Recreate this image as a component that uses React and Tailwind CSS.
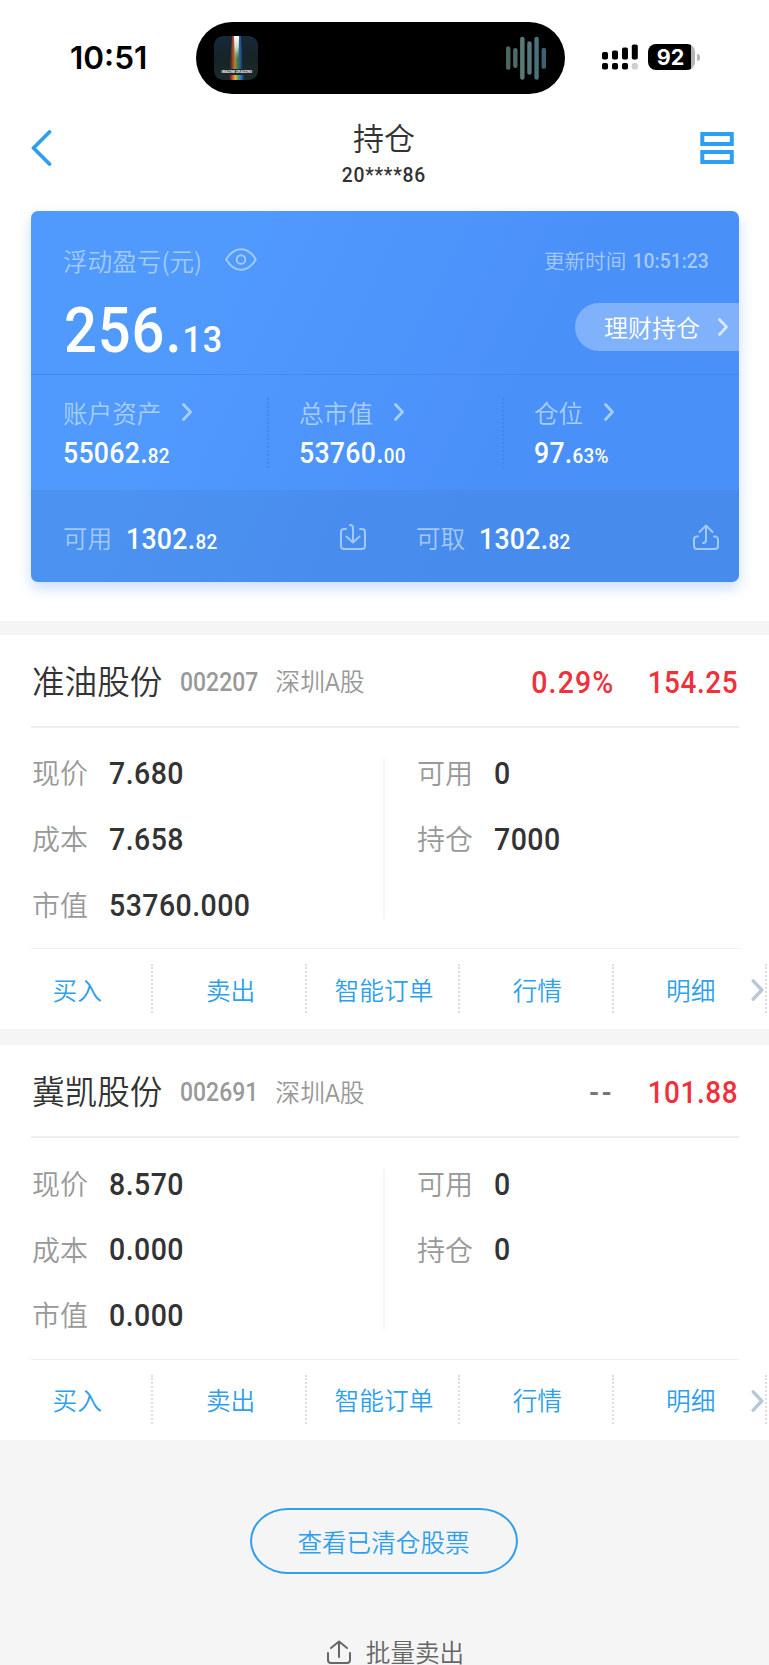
import React from 'react';

const summary = [
  { label: '账户资产', int: '55062.', dec: '82', width: 'w-[236px]' },
  { label: '总市值', int: '53760.', dec: '00', width: 'w-[235px]' },
  { label: '仓位', int: '97.', dec: '63%', width: 'w-[200px]' },
];

const stocks = [
  {
    name: '准油股份',
    code: '002207',
    market: '深圳A股',
    rate: '0.29%',
    profit: '154.25',
    left: [['现价', '7.680'], ['成本', '7.658'], ['市值', '53760.000']],
    right: [['可用', '0'], ['持仓', '7000']],
  },
  {
    name: '冀凯股份',
    code: '002691',
    market: '深圳A股',
    rate: '--',
    profit: '101.88',
    left: [['现价', '8.570'], ['成本', '0.000'], ['市值', '0.000']],
    right: [['可用', '0'], ['持仓', '0']],
  },
];

const actions = ['买入', '卖出', '智能订单', '行情', '明细'];

const wave = [
  { x: 0, y: 10, h: 24, fill: '#4a6660' },
  { x: 7.2, y: 12, h: 20, fill: '#4d6b66' },
  { x: 14.3, y: 0.5, h: 43.5, fill: '#5a7a76' },
  { x: 21.5, y: 5, h: 34, fill: '#56767c' },
  { x: 28.7, y: 0.5, h: 43.5, fill: '#48727c' },
  { x: 36, y: 11.5, h: 21.5, fill: '#3b6470' },
];

const Chevron = ({ className }) => (
  <svg className={className} viewBox="0 0 10 18" fill="none" stroke="currentColor" strokeWidth="2.8" strokeLinecap="round" strokeLinejoin="round">
    <path d="M1.5 1.5 8.5 9l-7 7.5" />
  </svg>
);

const StatusBar = () => (
  <div className="flex h-[116px] pt-[22px]">
    <div className="flex h-[72px] w-[196px] items-center pl-[70px] font-['Inter'] text-[31.500px] font-semibold text-black">10:51</div>
    <div className="flex h-[72px] w-[369px] items-center justify-between rounded-full bg-black pr-[19px] pl-[18px]">
      <svg className="h-11 w-11 rounded-[9px]" viewBox="0 0 44 44">
        <defs>
          <linearGradient id="prism">
            <stop offset="0" stopColor="#b9242a" stopOpacity="0" />
            <stop offset="0.2" stopColor="#c8452a" />
            <stop offset="0.4" stopColor="#e8b53a" />
            <stop offset="0.58" stopColor="#4aa35a" />
            <stop offset="0.8" stopColor="#2a62c4" />
            <stop offset="1" stopColor="#1b2f66" stopOpacity="0" />
          </linearGradient>
          <linearGradient id="beam" x2="0" y2="1">
            <stop offset="0" stopColor="#fff" />
            <stop offset="0.5" stopColor="#e9f2ff" stopOpacity="0.8" />
            <stop offset="1" stopColor="#9fd0e8" stopOpacity="0" />
          </linearGradient>
          <linearGradient id="sky" x2="0" y2="1">
            <stop offset="0" stopColor="#16293a" />
            <stop offset="0.5" stopColor="#172427" />
            <stop offset="1" stopColor="#1c2a2a" />
          </linearGradient>
        </defs>
        <rect width="44" height="44" fill="url(#sky)" />
        <path d="M18 0h9l2.500 33H15.500z" fill="url(#prism)" opacity="0.7" />
        <path d="M20 0h5l-.5 23h-3.500z" fill="url(#beam)" />
        <rect x="15" y="39" width="16" height="5" fill="url(#prism)" />
        <text x="22.800" y="37.400" textAnchor="middle" fontSize="3.200" fontWeight="700" fontFamily="Inter" fill="#fff">IMAGINE DRAGONS</text>
      </svg>
      <svg className="h-11 w-10" viewBox="0 0 40.500 44">
        {wave.map((b) => (
          <rect key={b.x} x={b.x} y={b.y} width="4.500" height={b.h} rx="2.200" fill={b.fill} />
        ))}
      </svg>
    </div>
    <div className="flex h-[70px] items-center pl-[37px]">
      <svg className="h-[26px] w-9" viewBox="0 0 36 26">
        <rect x="0" y="8" width="6" height="7.500" rx="1.800" />
        <rect x="10" y="6.500" width="6" height="9" rx="1.800" />
        <rect x="20" y="3.500" width="6" height="12" rx="1.800" />
        <rect x="29.800" y="0.500" width="6" height="15" rx="1.800" />
        <rect x="0" y="19" width="6" height="6.500" rx="1.800" />
        <rect x="10" y="19" width="6" height="6.500" rx="1.800" />
        <rect x="20" y="19" width="6" height="6.500" rx="1.800" />
        <rect x="29.800" y="19" width="6" height="6.500" rx="1.800" fill="#cfcfcf" />
      </svg>
      <div className="ml-2.5 flex h-[26px] w-[47px] items-center justify-center rounded-[8px] bg-linear-to-r from-black from-91% to-[#b5b5b5] to-91% pr-0.5 font-['Inter'] text-[21.500px] font-bold text-white">
        92
      </div>
      <div className="ml-0.5 h-[7px] w-[3px] rounded-r-full bg-[#b5b5b5]" />
    </div>
  </div>
);

const Header = () => (
  <header className="flex h-[94.500px] justify-between pr-[35px] pl-[30px]">
    <svg className="mt-3.5 h-9 w-[34px]" viewBox="0 0 34 36" fill="none" stroke="#2e9fee" strokeWidth="3.800" strokeLinecap="round" strokeLinejoin="round">
      <path d="M19.500 2 3.500 18l16 16" />
    </svg>
    <div className="flex flex-col items-center pl-1 text-[#333]">
      <h1 className="mt-0.5 text-[31px] leading-[38px] font-[350]">持仓</h1>
      <p className="mt-1.5 scale-x-92 font-['Roboto'] text-[21px] leading-[26px] font-medium tracking-[0.04em]">20****86</p>
    </div>
    <svg className="mt-4 h-8 w-[34px]" viewBox="0 0 34 32" fill="none" stroke="#2e9fee" strokeWidth="4">
      <rect x="2.300" y="2" width="29.500" height="10" />
      <rect x="2.300" y="20" width="29.500" height="10" />
    </svg>
  </header>
);

// Digits are set narrow and slightly tracked out, like DIN
const Amount = ({ int, dec }) => (
  <span className="inline-block origin-left scale-x-92 font-['Roboto'] text-[29px] leading-[34px] font-medium tracking-[0.01em] text-white">
    {int}<span className="text-[20.500px]">{dec}</span>
  </span>
);

const AssetCard = () => (
  <section className="mr-[30px] ml-[31px] h-[371.500px] overflow-hidden rounded-[7px] bg-linear-[115deg] from-[#5099fd] from-25% to-[#4a90f9] to-65% shadow-[0_6px_14px_rgba(74,144,248,0.3)]">
    <div className="h-[164px] border-b border-[#4489ec] pl-8">
      <div className="flex h-[92px] items-center justify-between pt-2 pr-[30px]">
        <div className="flex items-center text-[#a3caff]">
          <span className="text-[24.600px] font-[350]">浮动盈亏(元)</span>
          <svg className="mb-0.5 ml-[23px] h-[23px] w-8" viewBox="0 0 32 23" fill="none" stroke="currentColor" strokeWidth="1.900">
            <path d="M1.200 11.500C5 5 10 1.200 16 1.200s11 3.800 14.800 10.300C27 18 22 21.800 16 21.800S5 18 1.200 11.500z" strokeLinejoin="round" />
            <circle cx="16" cy="11.500" r="4.300" />
          </svg>
        </div>
        <div className="flex items-center text-[20.600px] font-[350] text-[#a6c8fc]">
          更新时间
          <span className="origin-right scale-x-92 pt-0.5 font-['Roboto'] text-[21px] font-medium">10:51:23</span>
        </div>
      </div>
      <div className="flex h-[48px] items-center justify-between">
        <span className="mt-[18px] ml-px inline-block origin-left scale-x-92 font-['Roboto'] text-[63px] leading-[60px] font-medium tracking-[0.015em] text-white">
          256.<span className="text-[37px]">13</span>
        </span>
        <button className="flex h-[48px] w-[164px] items-center rounded-l-full bg-white/30 pl-[29px] text-[24px] font-[350] text-white">
          理财持仓
          <Chevron className="ml-[18px] h-[18px] w-[10px] opacity-70" />
        </button>
      </div>
    </div>
    <div className="flex h-[115.500px] pt-[21px] pl-8">
      {summary.map((item, i) => (
        <div key={item.label} className={`flex h-[70px] ${item.width}`}>
          <div className="flex-1">
            <div className="flex h-[34px] items-center text-[24.600px] font-[350] text-[#a8cdff]">
              {item.label}
              <Chevron className="mb-0.5 ml-[21px] h-[18px] w-[10px]" />
            </div>
            <div className="mt-1.5">
              <Amount int={item.int} dec={item.dec} />
            </div>
          </div>
          {i < 2 && <div className="mt-0.5 mr-[30px] h-[70px] border-l-2 border-dotted border-[#4288ee]" />}
        </div>
      ))}
    </div>
    <div className="flex h-[92px] items-center bg-[#3c78c0]/20 pl-8 text-[24.600px] font-[350] text-[#a3c8fa]">
      <div className="flex w-[353px] items-center">
        <span className="mr-3.5 pt-0.5">可用</span>
        <div className="pt-1.5">
          <Amount int="1302." dec="82" />
        </div>
        <svg className="mt-0.5 mr-[50px] ml-auto h-[26px] w-[26px]" viewBox="0 0 26 26" fill="none" stroke="currentColor" strokeWidth="2" strokeLinecap="round" strokeLinejoin="round">
          <path d="M6 5H4a3 3 0 0 0-3 3v14a3 3 0 0 0 3 3h18a3 3 0 0 0 3-3V8a3 3 0 0 0-3-3h-2M10 1c2 0 3 1 3 3v14M6.500 12.500 13 18.500l6.500-6" />
        </svg>
      </div>
      <div className="flex flex-1 items-center">
        <span className="mr-3.5 pt-0.5">可取</span>
        <div className="pt-1.5">
          <Amount int="1302." dec="82" />
        </div>
        <svg className="mt-0.5 mr-[20px] ml-auto h-[26px] w-[26px]" viewBox="0 0 26 26" fill="none" stroke="currentColor" strokeWidth="2" strokeLinecap="round" strokeLinejoin="round">
          <path d="M5 12.500H4a3 3 0 0 0-3 3V22a3 3 0 0 0 3 3h18a3 3 0 0 0 3-3v-6.500a3 3 0 0 0-3-3h-1M10 19c2 0 3-1 3-3V1.500M6.500 8 13 1.500 19.500 8" />
        </svg>
      </div>
    </div>
  </section>
);

const Field = ({ label, value }) => (
  <div className="flex h-[65.800px] items-center">
    <span className="w-[78px] pb-0.5 pl-px text-[28px] font-[350] text-[#999]">{label}</span>
    <span className="origin-left scale-x-92 pt-0.5 font-['Roboto'] text-[31px] font-medium tracking-[0.015em] text-[#333]">{value}</span>
  </div>
);

const StockCard = ({ stock }) => (
  <section className="h-[394.500px] overflow-hidden bg-white">
    <div className="mr-[30px] ml-[31px] flex h-[93px] items-center border-b-2 border-[#eee]">
      <h2 className="pl-px text-[32.600px] font-[350] text-[#333]">{stock.name}</h2>
      <span className="ml-[18px] w-[95px] origin-left scale-x-90 pt-1 font-['Roboto'] text-[25.500px] font-medium text-[#999]">{stock.code}</span>
      <span className="pt-0.5 text-[24.800px] font-[350] text-[#999]">{stock.market}</span>
      <span className={`ml-auto origin-right scale-x-92 pt-1.5 font-['Roboto'] text-[31px] font-medium ${stock.rate === '--' ? 'tracking-[0.1em] text-[#777]' : 'tracking-[0.04em] text-[#ee313a]'}`}>{stock.rate}</span>
      <span className="w-[125px] origin-right scale-x-90 pt-1.5 pr-px text-right font-['Roboto'] text-[31px] font-medium tracking-[0.02em] text-[#ee313a]">{stock.profit}</span>
    </div>
    <div className="mr-[30px] ml-[31px] flex h-[221.500px] border-b border-[#eee] pt-[13px]">
      <div className="w-[352px]">
        {stock.left.map(([label, value]) => (
          <Field key={label} label={label} value={value} />
        ))}
      </div>
      <div className="mt-[18px] h-40 border-l-2 border-[#f5f5f5]" />
      <div className="pl-[31px]">
        {stock.right.map(([label, value]) => (
          <Field key={label} label={label} value={value} />
        ))}
      </div>
    </div>
    <div className="relative flex h-20 pt-[15px]">
      {actions.map((action) => (
        <button key={action} className="h-[49px] w-[153.400px] shrink-0 border-r-2 border-dotted border-[#ddd] pt-0.5 pl-[3px] text-[24.700px] font-[350] text-[#2e9fee]">
          {action}
        </button>
      ))}
      <Chevron className="absolute top-[30px] right-[5px] h-[22px] w-[13px] text-[#b9c8d9]" />
    </div>
  </section>
);

const App = () => {
  return (
    <div className="flex h-[1665px] w-[769px] flex-col overflow-hidden bg-[#f5f5f5] font-['Noto_Sans_CJK_SC',sans-serif]">
      <div className="h-[621px] shrink-0 bg-white">
        <StatusBar />
        <Header />
        <AssetCard />
      </div>

      {/* Positions */}
      <div className="flex shrink-0 flex-col gap-4 pt-[13.500px]">
        {stocks.map((stock) => (
          <StockCard key={stock.code} stock={stock} />
        ))}
      </div>

      <div className="flex flex-col items-center pt-[68px] pr-0.5">
        <button className="h-[66px] w-[268px] rounded-[38px/33px] border-2 border-[#2e9fee] pt-0.5 text-[24.600px] font-[350] text-[#2e9fee]">
          查看已清仓股票
        </button>
        <button className="mt-[60px] flex h-9 items-center pl-6 text-[24.600px] font-[350] text-[#666]">
          <svg className="mr-[15px] h-6 w-6" viewBox="0 0 24 24" fill="none" stroke="currentColor" strokeWidth="2" strokeLinecap="round" strokeLinejoin="round">
            <path d="M1 13v7a3 3 0 0 0 3 3h16a3 3 0 0 0 3-3v-7M12 17V1.500M4 8l8-6.500L20 8" />
          </svg>
          批量卖出
        </button>
      </div>
    </div>
  );
};

export default App;
